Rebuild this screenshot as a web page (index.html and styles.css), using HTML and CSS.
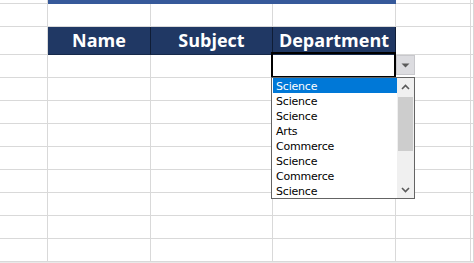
FILE: index.html
```html
<!DOCTYPE html>
<html>
<head>
<meta charset="utf-8">
<link rel="stylesheet" href="styles.css">
</head>
<body>
<div class="sheet">
  <div class="c"></div><div class="c bar"></div><div class="c"></div><div class="c"></div>

  <div class="c"></div><div class="c"></div><div class="c"></div><div class="c"></div><div class="c"></div><div class="c"></div>

  <div class="c"></div><div class="c hd">Name</div><div class="c hd">Subject</div><div class="c hd">Department</div><div class="c"></div><div class="c"></div>

  <div class="c"></div><div class="c"></div><div class="c"></div><div class="c"></div><div class="c"></div><div class="c"></div>
  <div class="c"></div><div class="c"></div><div class="c"></div><div class="c"></div><div class="c"></div><div class="c"></div>
  <div class="c"></div><div class="c"></div><div class="c"></div><div class="c"></div><div class="c"></div><div class="c"></div>
  <div class="c"></div><div class="c"></div><div class="c"></div><div class="c"></div><div class="c"></div><div class="c"></div>
  <div class="c"></div><div class="c"></div><div class="c"></div><div class="c"></div><div class="c"></div><div class="c"></div>
  <div class="c"></div><div class="c"></div><div class="c"></div><div class="c"></div><div class="c"></div><div class="c"></div>
  <div class="c"></div><div class="c"></div><div class="c"></div><div class="c"></div><div class="c"></div><div class="c"></div>
  <div class="c"></div><div class="c"></div><div class="c"></div><div class="c"></div><div class="c"></div><div class="c"></div>
  <div class="c"></div><div class="c"></div><div class="c"></div><div class="c"></div><div class="c"></div><div class="c"></div>

  <div class="band"></div>

  <div class="active"></div>
  <div class="ddbtn">
    <svg width="9" height="5" viewBox="0 0 9 5"><path d="M0.5 0.5 H8.5 L4.5 4.5 Z" fill="#5a5a5a"/></svg>
  </div>
  <div class="list">
    <div class="items">
      <div class="it sel">Science</div>
      <div class="it">Science</div>
      <div class="it">Science</div>
      <div class="it">Arts</div>
      <div class="it">Commerce</div>
      <div class="it">Science</div>
      <div class="it">Commerce</div>
      <div class="it">Science</div>
    </div>
    <div class="sb">
      <div class="arr">
        <svg width="9" height="6" viewBox="0 0 9 6"><polyline points="1,5 4.5,1.5 8,5" fill="none" stroke="#5a5a5a" stroke-width="1.6"/></svg>
      </div>
      <div class="track"><div class="thumb"></div></div>
      <div class="arr">
        <svg width="9" height="6" viewBox="0 0 9 6"><polyline points="1,1 4.5,4.5 8,1" fill="none" stroke="#5a5a5a" stroke-width="1.6"/></svg>
      </div>
    </div>
  </div>
</div>
</body>
</html>
```

FILE: styles.css
```css
html, body {
  margin: 0;
  padding: 0;
  background: #ffffff;
  overflow: hidden;
}

.sheet {
  position: relative;
  width: 474px;
  height: 263px;
  display: grid;
  grid-template-columns: 48px 103px 122px 123px 75px 1fr;
  grid-template-rows: 4px 23px 28px repeat(9, 23px) 1fr;
}

.c {
  box-sizing: border-box;
  border-right: 1px solid #d9d9d9;
  border-bottom: 1px solid #d9d9d9;
}

.bar {
  grid-column: span 3;
  background: #36599a;
  border-right-color: #36599a;
  border-bottom-color: #36599a;
}

.hd {
  background: #203864;
  border-right-color: #0f1d36;
  border-bottom-color: #16294a;
  color: #ffffff;
  font-family: "Open Sans", Lato, sans-serif;
  font-weight: 700;
  font-size: 18px;
  line-height: 27px;
  text-align: center;
}

.band {
  grid-column: 1 / -1;
  background: #e9e9e9;
}

.active {
  position: absolute;
  left: 271px;
  top: 52px;
  width: 125px;
  height: 26px;
  box-sizing: border-box;
  border: 2px solid #000000;
}

.ddbtn {
  position: absolute;
  left: 396px;
  top: 55px;
  width: 19px;
  height: 20px;
  box-sizing: border-box;
  background: #dcdce0;
  border: 1px solid #c8c8cc;
  display: flex;
  align-items: center;
  justify-content: center;
}

.list {
  position: absolute;
  left: 271px;
  top: 77px;
  width: 144px;
  height: 122px;
  box-sizing: border-box;
  border: 1px solid #646464;
  background: #ffffff;
  display: flex;
  font-family: "DejaVu Sans", Verdana, sans-serif;
  font-size: 11px;
  letter-spacing: -0.2px;
  color: #000000;
}

.items {
  width: 125px;
  padding-left: 1px;
  box-sizing: border-box;
}

.it {
  height: 15px;
  box-sizing: border-box;
  padding: 2px 0 0 3px;
  line-height: 13px;
  white-space: nowrap;
}

.it.sel {
  background: #0078d7;
  color: #ffffff;
}

.sb {
  width: 17px;
  background: #f0f0f0;
  display: flex;
  flex-direction: column;
}

.arr {
  height: 17px;
  display: flex;
  align-items: center;
  justify-content: center;
}

.track {
  flex: 1;
  padding: 2px 1px 0 1px;
}

.thumb {
  height: 54px;
  background: #cdcdcd;
}
```
